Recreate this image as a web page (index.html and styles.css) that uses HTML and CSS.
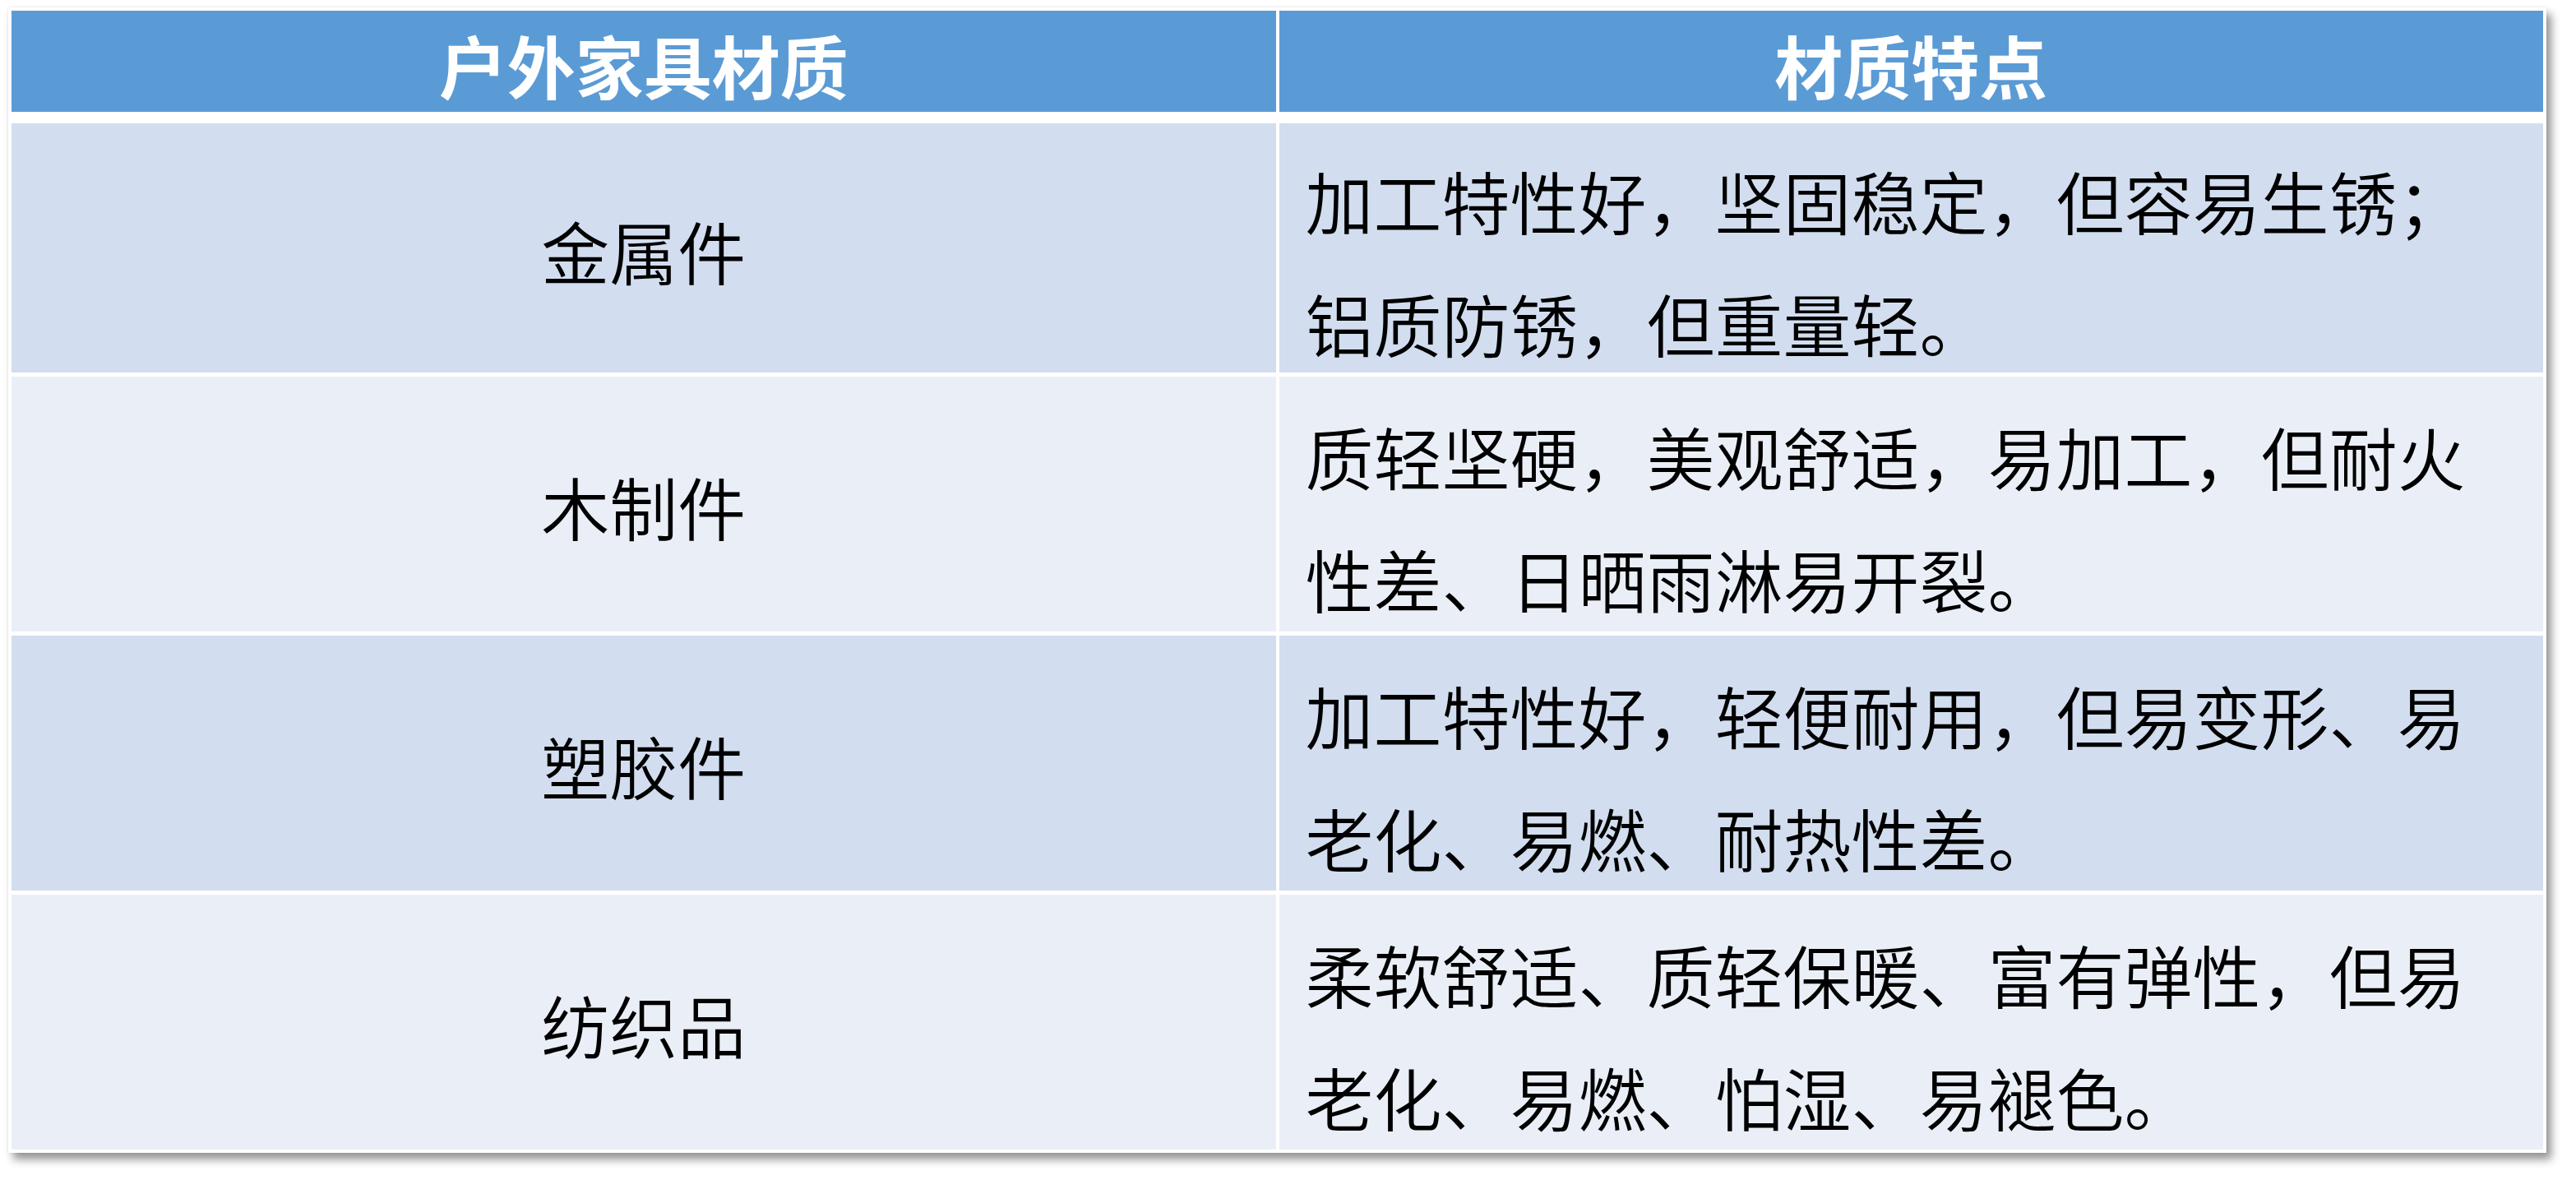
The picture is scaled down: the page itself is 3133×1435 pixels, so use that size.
FILE: index.html
```html
<!DOCTYPE html>
<html lang="zh-CN">
<head>
<meta charset="utf-8">
<title>户外家具材质</title>
<link rel="stylesheet" href="styles.css">
</head>
<body>
<div class="sheet">
  <div class="table">
    <div class="cell head">户外家具材质</div>
    <div class="cell head">材质特点</div>

    <div class="cell name band-a">金属件</div>
    <div class="cell desc band-a"><p>加工特性好，坚固稳定，但容易生锈；铝质防锈，但重量轻。</p></div>

    <div class="cell name band-b">木制件</div>
    <div class="cell desc band-b"><p>质轻坚硬，美观舒适，易加工，但耐火性差、日晒雨淋易开裂。</p></div>

    <div class="cell name band-a">塑胶件</div>
    <div class="cell desc band-a"><p>加工特性好，轻便耐用，但易变形、易老化、易燃、耐热性差。</p></div>

    <div class="cell name band-b">纺织品</div>
    <div class="cell desc band-b"><p>柔软舒适、质轻保暖、富有弹性，但易老化、易燃、怕湿、易褪色。</p></div>
  </div>
</div>
</body>
</html>
```

FILE: styles.css
```css
html, body {
  margin: 0;
  padding: 0;
  background: #ffffff;
}

body {
  min-height: 1435px;
  box-sizing: border-box;
  padding-top: 9px;
  font-family: "Noto Sans CJK SC", "Noto Sans", sans-serif;
}

.sheet {
  box-sizing: border-box;
  width: 3087px;
  margin: 0 0 0 10px;
  padding: 4px;
  background: #ffffff;
  box-shadow: 6px 8px 10px rgba(0, 0, 0, 0.42), 0 0 2px rgba(0, 0, 0, 0.12);
}

.table {
  display: grid;
  grid-template-columns: 1fr 1fr;
  grid-template-rows: 132px 303px 310px 310px 310px;
  column-gap: 4px;
  row-gap: 5px;
}

.cell {
  display: flex;
  align-items: center;
  font-size: 83px;
  color: #000000;
  min-width: 0;
}

.head {
  margin-bottom: 9px;
  justify-content: center;
  background: #5b9bd5;
  color: #ffffff;
  font-weight: 700;
  padding-top: 6px;
  box-sizing: border-box;
}

.name {
  justify-content: center;
  font-weight: 350;
  padding-top: 4px;
  box-sizing: border-box;
}

.desc {
  padding: 0 32px;
  font-weight: 350;
}

.desc p {
  margin: 0;
  padding-top: 32px;
  line-height: 149px;
}

.band-a {
  background: #d2deef;
}

.band-b {
  background: #eaeff7;
}
```
